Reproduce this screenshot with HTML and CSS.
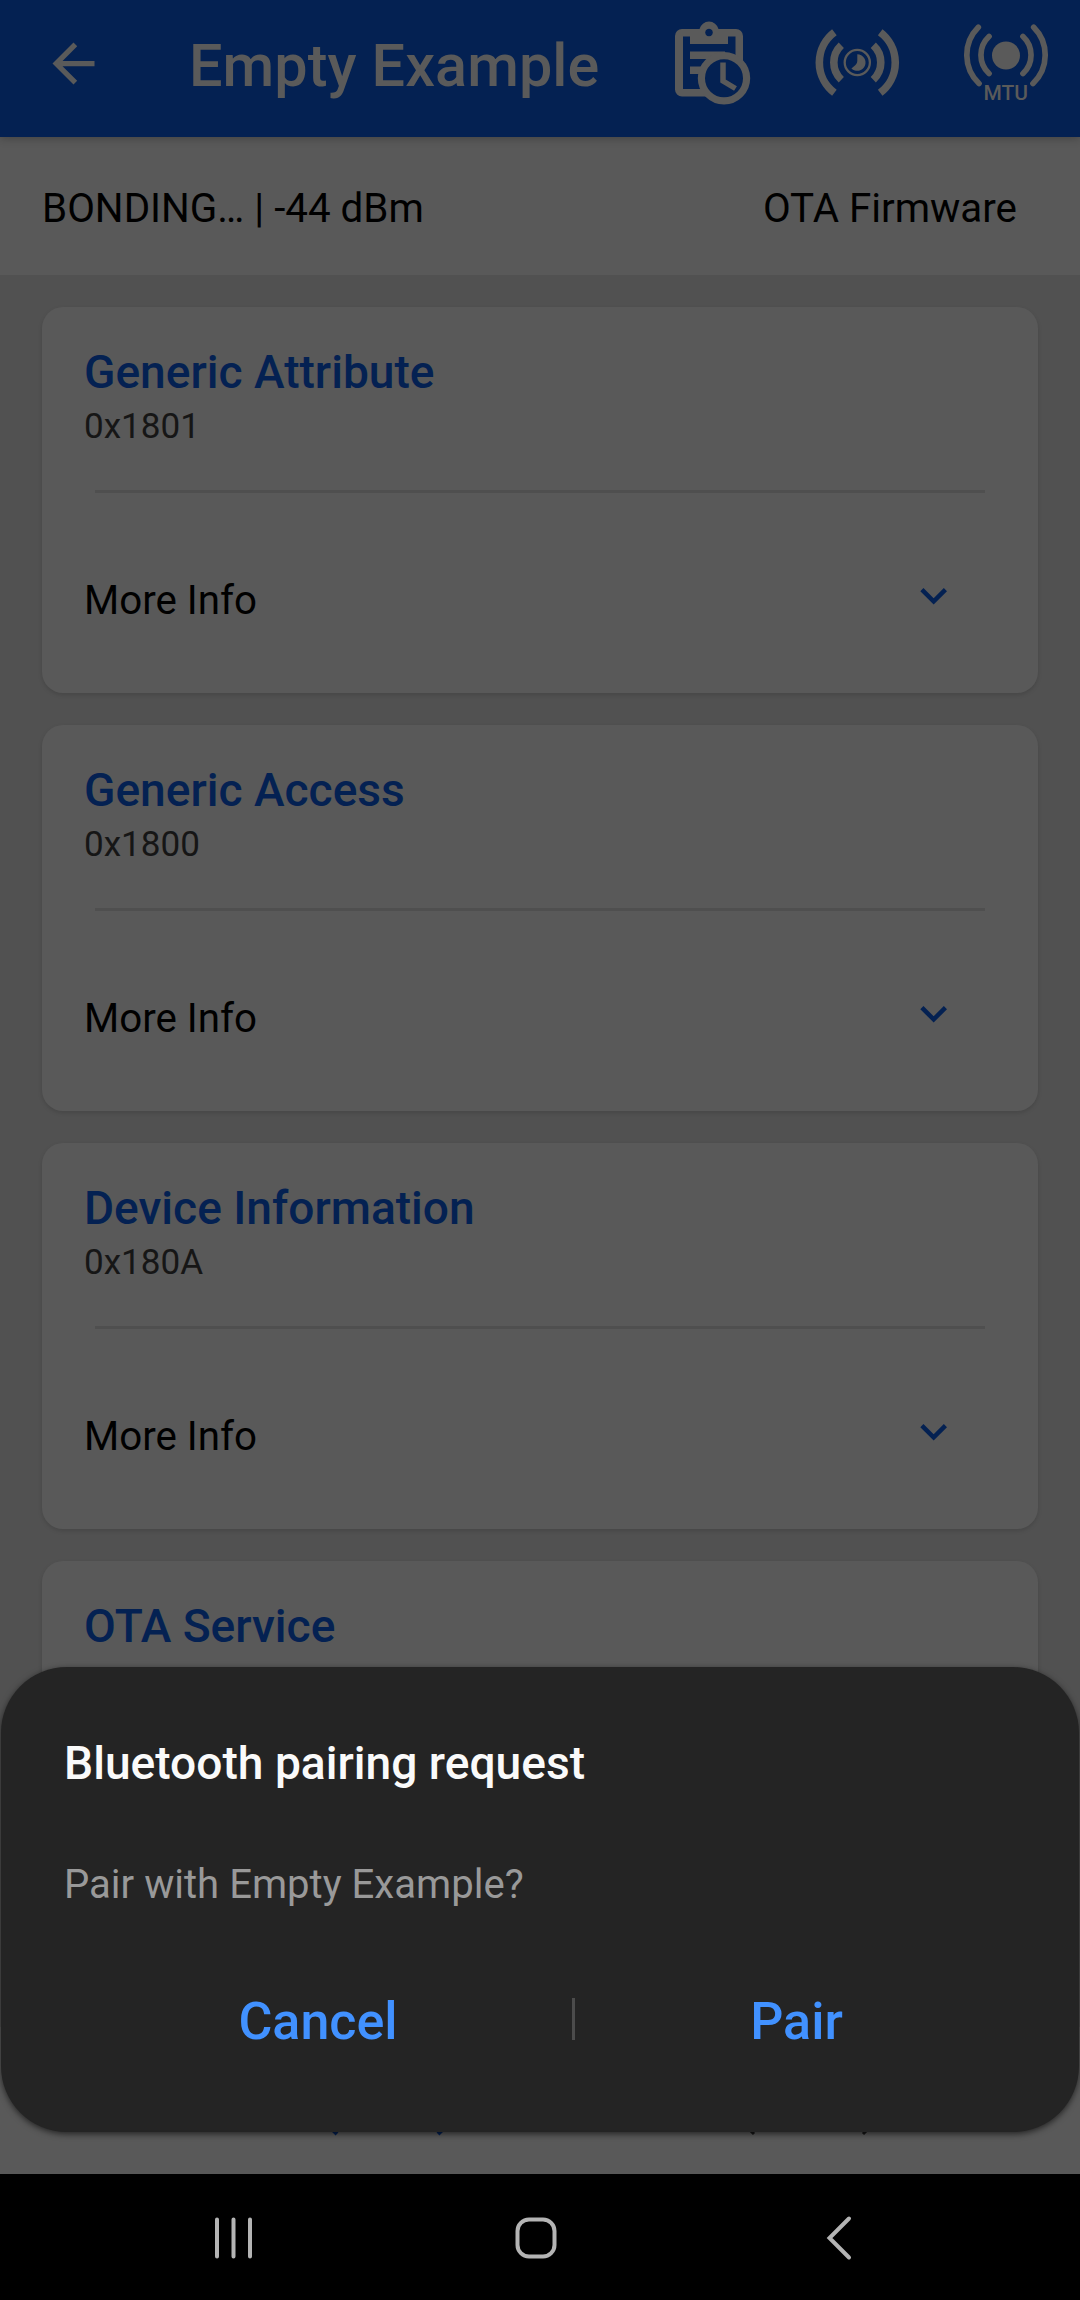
FILE: index.html
```html
<!DOCTYPE html>
<html lang="en">
<head>
<meta charset="utf-8">
<title>Empty Example</title>
<link rel="stylesheet" href="styles.css">
</head>
<body>
<div class="screen">
  <div class="app">
    <header class="toolbar">
      <svg class="back" viewBox="0 0 24 24"><path d="M20 11H7.83l5.59-5.59L12 4l-8 8 8 8 1.41-1.41L7.83 13H20z"/></svg>
      <h1 class="toolbar-title">Empty Example</h1>
      <div class="actions">
        <svg class="action action-log" viewBox="0 0 90 90">
          <path fill-rule="evenodd" d="M14 16H24.500A9.800 9.800 0 0 1 43.500 16H61A7 7 0 0 1 68 23V60H60.500V23.500H53V31H15V23.500H8V76H32V83.500H7A7 7 0 0 1 0 76.500V23A7 7 0 0 1 7 16ZM34 15.700a3.800 3.800 0 1 0 0.010 0Z"/>
          <path d="M15 38.500H50V46H15ZM15 53.500H32V61H15Z"/>
          <circle class="cutout" cx="49" cy="65.300" r="22.600"/>
          <path class="clock-hands" d="M48 49.500V68L60.500 75.500"/>
        </svg>
        <svg class="action action-interval" viewBox="0 0 90 90">
          <g class="arcs-butt">
            <path d="M22.400 19.200A38 38 0 0 0 22.400 79.800M68.200 19.200A38 38 0 0 1 68.200 79.800"/>
            <path d="M29.300 32.300A23.500 23.500 0 0 0 29.300 66.700M61.300 32.300A23.500 23.500 0 0 1 61.300 66.700"/>
          </g>
          <circle class="ring" cx="45.300" cy="49.500" r="12.600"/>
          <path d="M45.300 41.200A8.300 8.300 0 1 1 39.400 55.400L43.500 52Q45.300 50.500 45.300 48Z"/>
        </svg>
        <svg class="action" viewBox="0 0 90 90">
          <g class="arcs-round">
            <path d="M17.300 14.300A39.300 39.300 0 0 0 18 70.500M72.700 14.300A39.300 39.300 0 0 1 72 70.500"/>
            <path d="M28 23.500A25.300 25.300 0 0 0 28 60.500M62 23.500A25.300 25.300 0 0 1 62 60.500"/>
          </g>
          <circle cx="45" cy="42.500" r="14"/>
          <text class="mtu" x="44.700" y="87" text-anchor="middle">MTU</text>
        </svg>
      </div>
    </header>
    <div class="status">
      <span>BONDING… | -44 dBm</span>
      <span>OTA Firmware</span>
    </div>
    <main class="services">
      <section class="card">
        <h2 class="name">Generic Attribute</h2>
        <p class="uuid">0x1801</p>
        <div class="rule"></div>
        <div class="more"><span class="more-label">More Info</span><svg class="chevron" viewBox="0 0 24 24"><path d="M7.410 8.590L12 13.170l4.590-4.580L18 10l-6 6-6-6z"/></svg></div>
      </section>
      <section class="card">
        <h2 class="name">Generic Access</h2>
        <p class="uuid">0x1800</p>
        <div class="rule"></div>
        <div class="more"><span class="more-label">More Info</span><svg class="chevron" viewBox="0 0 24 24"><path d="M7.410 8.590L12 13.170l4.590-4.580L18 10l-6 6-6-6z"/></svg></div>
      </section>
      <section class="card">
        <h2 class="name">Device Information</h2>
        <p class="uuid">0x180A</p>
        <div class="rule"></div>
        <div class="more"><span class="more-label">More Info</span><svg class="chevron" viewBox="0 0 24 24"><path d="M7.410 8.590L12 13.170l4.590-4.580L18 10l-6 6-6-6z"/></svg></div>
      </section>
      <section class="card">
        <h2 class="name">OTA Service</h2>
      </section>
    </main>
    <div class="tabs">
      <svg class="tab tab-active" viewBox="0 0 116 11"><path d="M2 -2L7 3M113 -2L108 3"/></svg>
      <svg class="tab" viewBox="0 0 116 11"><path d="M-2 -2L3 3M117 -2L112 3"/></svg>
    </div>
    <div class="dialog" role="dialog">
      <h2 class="dialog-title">Bluetooth pairing request</h2>
      <p class="dialog-text">Pair with Empty Example?</p>
      <div class="buttons">
        <span class="button">Cancel</span>
        <span class="separator"></span>
        <span class="button">Pair</span>
      </div>
    </div>
  </div>
  <nav class="system-nav">
    <svg class="key" viewBox="0 0 48 48"><path d="M8 5.500V42.500M24.500 5.500V42.500M41 5.500V42.500"/></svg>
    <svg class="key" viewBox="0 0 48 48"><rect x="5.500" y="5.500" width="37" height="37" rx="11.500"/></svg>
    <svg class="key" viewBox="0 0 48 48"><path d="M35 4.500L15.500 24L35 43.500"/></svg>
  </nav>
</div>
</body>
</html>
```
FILE: styles.css
```css
* { box-sizing: border-box; }
body, h1, h2, p { margin: 0; }
body { font-family: Roboto, sans-serif; background: #000; }
svg { display: block; flex: none; }

.screen { display: flex; flex-direction: column; width: 1080px; height: 2300px; overflow: hidden; }
.app { position: relative; display: flex; flex-direction: column; height: 2174px; overflow: hidden; background: #515151; }

.toolbar { flex: none; display: flex; align-items: flex-start; height: 137px; padding-left: 42px; background: #042152; box-shadow: 0 1px 9px rgba(0, 0, 0, .28); z-index: 1; }
.back { width: 63px; height: 63px; margin-top: 32px; fill: #5a5a5a; }
.toolbar-title { width: 486px; margin: 32px 0 0 84px; font-size: 59.3px; font-weight: 500; line-height: 68px; letter-spacing: .1px; color: #5a5a5a; white-space: nowrap; }
.actions { display: flex; margin-top: 12.5px; }
.action { width: 90px; height: 90px; fill: #5a5a5a; overflow: visible; }
.action-log { margin-right: 47px; }
.action-interval { margin-right: 59px; }
.cutout { fill: #042152; stroke: #5a5a5a; stroke-width: 7.2; }
.clock-hands { fill: none; stroke: #5a5a5a; stroke-width: 5.5; }
.arcs-butt { fill: none; stroke: #5a5a5a; stroke-width: 7.6; }
.arcs-round { fill: none; stroke: #5a5a5a; stroke-width: 5.7; stroke-linecap: round; }
.ring { fill: none; stroke: #5a5a5a; stroke-width: 2.3; }
.mtu { font-size: 21px; font-weight: 500; }

.status { flex: none; display: flex; justify-content: space-between; height: 138px; padding: 49px 63px 0 42px; background: #595959; font-size: 40.35px; line-height: 46px; color: #000; }

.services { flex: 1; min-height: 0; overflow: hidden; display: flex; flex-direction: column; gap: 32px; padding: 32px 42px 0; }
.card { flex: none; height: 386px; padding: 39px 53px 0 42px; border-radius: 21px; background: #595959; box-shadow: 0 2px 4px rgba(0, 0, 0, .13); }
.name { font-size: 46.1px; font-weight: 500; line-height: 52px; color: #042152; }
.uuid { margin-top: 8px; font-size: 35.1px; line-height: 40px; color: #161616; }
.rule { height: 3px; margin: 44px 0 0 11px; background: #4f4f4f; }
.more { display: flex; justify-content: space-between; padding-right: 25px; }
.more-label { margin-top: 85px; font-size: 40.3px; line-height: 46px; color: #000; }
.chevron { width: 53.3px; height: 53.3px; margin-top: 76px; fill: #042152; }

.tabs { flex: none; display: flex; align-items: flex-end; justify-content: space-between; height: 147px; padding: 0 213px 32px 330px; background: #595959; }
.tab { width: 116px; height: 11px; fill: none; stroke: #161616; stroke-width: 3; overflow: visible; }
.tab-active { stroke: #042152; stroke-width: 4; }

.dialog { position: absolute; left: 1px; right: 1px; bottom: 42px; height: 465px; padding: 67px 63px 0; border-radius: 66px; background: #242424; box-shadow: 0 2px 6px rgba(0, 0, 0, .6); z-index: 2; }
.dialog-title { font-size: 46.15px; font-weight: 500; line-height: 59px; color: #fafafa; }
.dialog-text { margin-top: 69px; font-size: 40.1px; line-height: 46px; color: #999; }
.buttons { display: grid; grid-template-columns: 508px 3px 443px; align-items: center; height: 72px; margin: 75px -3px 0 0; }
.button { padding-top: 6px; text-align: center; font-size: 52px; font-weight: 500; line-height: 62px; color: #4191ff; }
.separator { height: 42px; background: #4c4c4c; }

.system-nav { flex: none; display: flex; justify-content: space-between; height: 126px; padding: 39.5px 218px 0 209px; background: #000; }
.key { width: 48px; height: 48px; fill: none; stroke: #b4b4b4; stroke-width: 4; stroke-linecap: round; }
```
